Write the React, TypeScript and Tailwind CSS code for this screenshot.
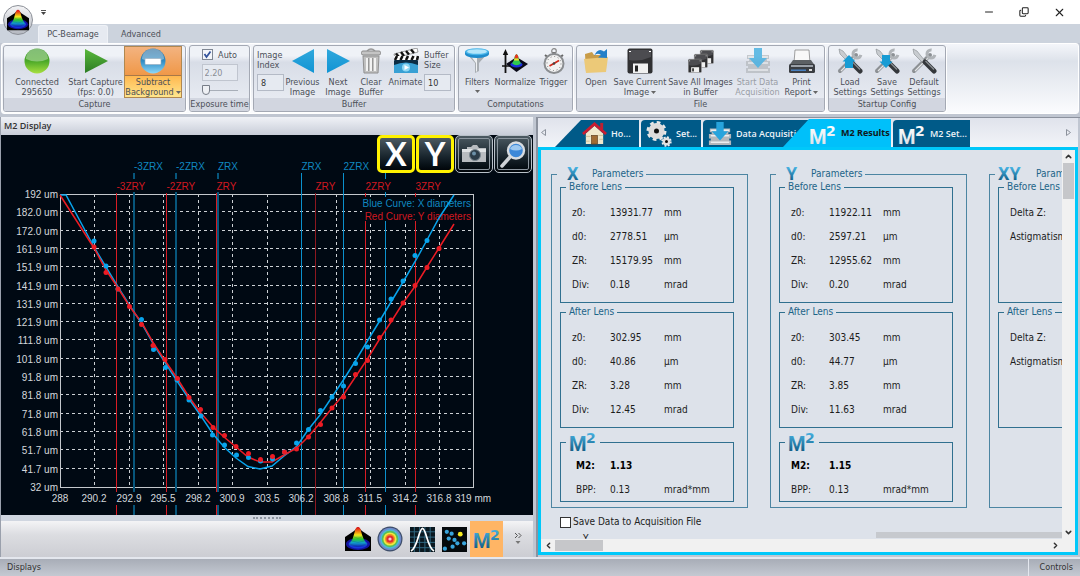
import { useId } from "react";
import type { ReactNode } from "react";
import { ChevronDown, ChevronLeft, ChevronRight, ChevronUp, Copy, Minus, X as Close } from "lucide-react";
import clsx from "clsx";

/* ---------- icons ---------- */

function BeamIcon({ className = "size-[26px]" }: { className?: string }) {
  const id = useId();
  return (
    <svg viewBox="0 0 26 26" className={className} aria-hidden="true">
      <defs>
        <linearGradient id={id} x1="0" y1="0" x2="0" y2="1">
          <stop offset="0.05" stopColor="#e01818" />
          <stop offset="0.25" stopColor="#f08a10" />
          <stop offset="0.4" stopColor="#f4e61c" />
          <stop offset="0.6" stopColor="#2cc82c" />
          <stop offset="0.78" stopColor="#12a0c8" />
          <stop offset="1" stopColor="#1020c0" />
        </linearGradient>
      </defs>
      <path d="M0 11 L9 5 L13 1 L17 5 L26 11 V25 H0 Z" fill="#000" />
      <ellipse cx="13" cy="18" rx="12" ry="6" fill="#1414a0" />
      <ellipse cx="13" cy="18" rx="9.5" ry="4.6" fill="#1838e0" />
      <path d="M13 1 C16 1 16 6 17.500 10 C19 14 20 16 22 18 C20 22 6 22 4 18 C6 16 7.500 14 8.500 10 C10 6 10 1 13 1 Z" fill={`url(#${id})`} />
      <path d="M7 15 Q13 18 19 15 M9 11 Q13 13.500 17 11 M5 18 Q13 22 21 18" stroke="#0a3060" strokeOpacity=".35" strokeWidth=".6" fill="none" />
    </svg>
  );
}

function Ball({ tone, children }: { tone: "green" | "blue"; children?: ReactNode }) {
  const id = useId();
  const stops = tone === "green" ? ["#3f9a2c", "#4aa828", "#a8e040"] : ["#2a6c9c", "#2f8cc4", "#8fd8f8"];
  return (
    <svg viewBox="0 0 26 26" className="size-[26px]" aria-hidden="true">
      <defs>
        <linearGradient id={id} x1="0" y1="0" x2="0" y2="1">
          <stop offset="0" stopColor={stops[0]} />
          <stop offset="0.5" stopColor={stops[1]} />
          <stop offset="1" stopColor={stops[2]} />
        </linearGradient>
      </defs>
      <circle cx="13" cy="13" r="12.500" fill={`url(#${id})`} />
      <path d="M2 11 A11 10.500 0 0 1 24 11 Q13 16 2 11Z" fill="#fff" opacity=".35" />
      {children}
    </svg>
  );
}

function Triangle({ dir, color }: { dir: "left" | "right"; color: [string, string] }) {
  const id = useId();
  return (
    <svg viewBox="0 0 26 26" className="size-[26px]" aria-hidden="true">
      <defs>
        <linearGradient id={id} x1="0" y1="0" x2="0" y2="1">
          <stop offset="0" stopColor={color[0]} />
          <stop offset="1" stopColor={color[1]} />
        </linearGradient>
      </defs>
      <path d={dir === "right" ? "M2 1 L25 13 L2 25 Z" : "M24 1 L2 13 L24 25 Z"} fill={`url(#${id})`} />
    </svg>
  );
}

function TrashIcon() {
  return (
    <svg viewBox="0 0 26 26" className="size-[26px]" aria-hidden="true">
      <path d="M9 3 Q13 -1 17 3" stroke="#999" strokeWidth="1.5" fill="none" />
      <rect x="3.500" y="3" width="19" height="4" rx="1.500" fill="#c4c4c4" stroke="#8a8a8a" />
      <path d="M5 8 H21 L20 25 H6 Z" fill="#c0c0c0" stroke="#909090" />
      <path d="M9 10 V23 M13 10 V23 M17 10 V23" stroke="#f2f2f2" strokeWidth="2" />
      <path d="M10.500 10 V23 M14.500 10 V23" stroke="#8c8c8c" strokeWidth=".8" />
    </svg>
  );
}

function ClapperIcon() {
  return (
    <svg viewBox="0 0 26 26" className="size-[26px]" aria-hidden="true">
      <path d="M1 6 L24 0 L25 4 L2 10 Z" fill="#fff" stroke="#444" strokeWidth=".5" />
      <path d="M3 5.500 L6 9 M8 4 L11 8 M13 3 L16 6.500 M18 1.500 L21 5" stroke="#111" strokeWidth="2.4" />
      <rect x="1" y="8" width="24" height="4" fill="#fff" />
      <path d="M4 8 L2 12 M9.500 8 L7.500 12 M15 8 L13 12 M20.500 8 L18.500 12 M25 8 L24 12" stroke="#111" strokeWidth="2.6" />
      <rect x="1" y="12" width="24" height="13" rx="1" fill="#0b2c44" />
      <path d="M1 17 Q13 12 25 17 V25 H1Z" fill="#38a0d4" />
      <circle cx="13" cy="19.500" r="4" fill="#8ed8f4" />
      <path d="M11.500 17 L16 19.500 L11.500 22 Z" fill="#fff" />
    </svg>
  );
}

function FunnelIcon() {
  return (
    <svg viewBox="0 0 26 26" className="size-[26px]" aria-hidden="true">
      <path d="M2 5 L11 15 V25 L15 23 V15 L24 5 Z" fill="#a8adb2" />
      <path d="M6 7 L12 15 V24 L13 23 V14 L13 7Z" fill="#eef0f2" />
      <path d="M1 3.500 V6 A12 4 0 0 0 25 6 V3.500 Z" fill="#1f8ccc" />
      <ellipse cx="13" cy="3.800" rx="12" ry="3.500" fill="#48b4e8" />
      <ellipse cx="13" cy="3.500" rx="10" ry="2.300" fill="#b4e6fa" />
    </svg>
  );
}

function NormalizeIcon() {
  return (
    <svg viewBox="0 0 26 26" className="size-[26px]" aria-hidden="true">
      <path d="M3.500 25 V5" stroke="#111" strokeWidth="1.800" />
      <path d="M3.500 1 L.8 7 H6.200 Z" fill="#111" />
      <path d="M0 18 H8" stroke="#111" strokeWidth="1.4" />
      <path d="M14.500 9 L26 16 L14.500 24 L4 16 Z" fill="#0a0a18" />
      <ellipse cx="14.500" cy="16.500" rx="6" ry="3" fill="#1c30d8" />
      <path d="M14.500 6 Q16.500 7 17 12 L19 15.500 Q14.500 19 10 15.500 L12 12 Q12.500 7 14.500 6Z" fill="#2ec850" />
      <path d="M14.500 6 Q16.500 7 16.500 10.500 H12.500 Q12.500 7 14.500 6Z" fill="#e83420" />
      <path d="M12.500 10.500 H16.500 L17 12.500 H12 Z" fill="#f4e030" />
    </svg>
  );
}

function StopwatchIcon() {
  return (
    <svg viewBox="0 0 26 26" className="size-[26px]" aria-hidden="true">
      <circle cx="13" cy="3" r="2.300" fill="none" stroke="#888" strokeWidth="1.200" />
      <rect x="11.500" y="4" width="3" height="3" fill="#777" />
      <path d="M4 7 L6.500 9 M22 7 L19.500 9" stroke="#666" strokeWidth="2" />
      <circle cx="13" cy="15.500" r="9.500" fill="#f2f2f2" stroke="#8a8d90" strokeWidth="2" />
      <circle cx="13" cy="15.500" r="7" fill="none" stroke="#777" strokeWidth="1" strokeDasharray="1 2.660" />
      <path d="M8.500 18 L18 12.500" stroke="#d02818" strokeWidth="1.600" />
      <circle cx="13" cy="15.500" r="1.300" fill="#444" />
    </svg>
  );
}

function OpenIcon() {
  return (
    <svg viewBox="0 0 26 26" className="size-[26px]" aria-hidden="true">
      <path d="M2 6 L9 4 L11 7 H23 V24 H3 Z" fill="#c89c48" />
      <path d="M1 11 L25 9 L23 24 L3 25 Z" fill="#ecc978" />
      <path d="M11 8 Q15 -1 21 3.500 L24 1 V10 L15 9.500 L18 7 Q14 4 11 8Z" fill="#2480c8" />
    </svg>
  );
}

function Floppy({ x = 0, y = 0, s = 1 }: { x?: number; y?: number; s?: number }) {
  return (
    <g transform={`translate(${x} ${y}) scale(${s})`}>
      <rect x=".5" y=".5" width="25" height="25" rx="2" fill="#303032" stroke="#aaa" strokeWidth={s < 1 ? 1 : 0} />
      <path d="M2 2 H24 V9 Q13 14 2 12Z" fill="#4c4c50" />
      <rect x="6" y="15.500" width="15" height="9.500" fill="#f0f0f0" />
      <rect x="8" y="17.500" width="3" height="6" fill="#222" />
      <path d="M2 3.500 H4 M22 3.500 H24" stroke="#fff" strokeWidth="1.200" />
    </g>
  );
}

function DataIcon({ className = "size-[26px]" }: { className?: string }) {
  return (
    <svg viewBox="0 0 26 26" className={className} aria-hidden="true">
      <path d="M2 7 H24 V11 H22 V13 H25 V18 H23 V20 H25 V25 H1 V20 H3 V18 H1 V13 H4 V11 H2Z" fill="#b4b8bc" />
      <path d="M3 9 H23 M3 15 H23 M3 22 H23" stroke="#eceef0" strokeWidth="1.600" />
      <path d="M9 0 H17 V10 H22 L13 20 L4 10 H9 Z" fill="#28a4dc" />
    </svg>
  );
}

function PrinterIcon() {
  return (
    <svg viewBox="0 0 26 26" className="size-[26px]" aria-hidden="true">
      <path d="M6 2 H20 L21 15 H5 Z" fill="#f8f8f8" stroke="#888" strokeWidth=".8" />
      <path d="M4 12 H22 L25.500 17 H.5 Z" fill="#5c6064" />
      <rect x="0" y="16" width="26" height="9" rx="1.500" fill="#3a3d42" />
      <rect x="2" y="17" width="22" height="2" fill="#9aa0a8" />
      <rect x="2" y="21.500" width="15" height="1.500" fill="#4880c0" />
      <rect x="20" y="21" width="3" height="2" fill="#ddd" />
    </svg>
  );
}

function ToolsIcon({ arrow }: { arrow?: "up" | "down" }) {
  return (
    <svg viewBox="0 0 26 26" className="size-[26px]" aria-hidden="true">
      <path d="M3 23 L19 7" stroke="#8c9094" strokeWidth="4" strokeLinecap="round" />
      <path d="M4 23 L18 9" stroke="#e4e6e8" strokeWidth="1.200" />
      <circle cx="20" cy="6" r="4" fill="none" stroke="#b0b4b8" strokeWidth="3" strokeDasharray="18 7.100" strokeDashoffset="-1" />
      <path d="M2 1 L6 3 L14 13 L12 15 L3 6 Z" fill="#c8ccd0" stroke="#85898d" strokeWidth=".6" />
      <path d="M14 14 L23 23" stroke="#34373b" strokeWidth="5" strokeLinecap="round" />
      <path d="M14.500 13 L23 21.500" stroke="#8a8e92" strokeWidth="1.200" />
      {arrow === "up" && <path d="M12 7 L18.500 13.500 H16 V20 H8 V13.500 H5.500 Z" fill="#189cd4" />}
      {arrow === "down" && <path d="M12 20 L18.500 13.500 H16 V7 H8 V13.500 H5.500 Z" fill="#189cd4" />}
    </svg>
  );
}

function HouseIcon() {
  return (
    <svg viewBox="0 0 26 26" className="size-[25px]" aria-hidden="true">
      <rect x="19" y="2" width="3" height="7" fill="#c02030" />
      <path d="M4 13 L13 5 L22 13 V24 H4 Z" fill="#f0e8cc" />
      <path d="M4 16 H9 M18 19 H22 M4 21 H8 M17 15 H22" stroke="#cfc098" strokeWidth="1" />
      <path d="M1 13.500 L13 3 L25 13.500" stroke="#c81c30" strokeWidth="3" fill="none" />
      <rect x="10" y="15" width="6" height="9" fill="#a06c34" stroke="#5c3c1c" strokeWidth=".7" />
    </svg>
  );
}

function GearsIcon() {
  return (
    <svg viewBox="0 0 26 26" className="size-[26px]" aria-hidden="true">
      <circle cx="10.500" cy="10" r="8.500" fill="none" stroke="#e8e8e8" strokeWidth="3" strokeDasharray="3.600 3.070" />
      <circle cx="10.500" cy="10" r="5.300" fill="#101010" stroke="#dcdcdc" strokeWidth="5.600" />
      <circle cx="20.500" cy="20.500" r="4.200" fill="none" stroke="#f0f0f0" strokeWidth="2" strokeDasharray="1.800 1.500" />
      <circle cx="20.500" cy="20.500" r="2.700" fill="#101010" stroke="#e0e0e0" strokeWidth="2.400" />
    </svg>
  );
}

function TargetIcon() {
  const rings: [number, string][] = [
    [12.5, "#3c4c68"], [11.3, "#7088c8"], [9.8, "#4cb8d8"], [8.3, "#58c058"], [6.6, "#f0e840"], [5, "#f09020"], [3.6, "#e02c30"], [1.6, "#f8c8d0"],
  ];
  return (
    <svg viewBox="0 0 26 26" className="size-[26px]" aria-hidden="true">
      {rings.map(([r, fill]) => <circle key={r} cx="13" cy="13" r={r} fill={fill} />)}
    </svg>
  );
}

function ProfileIcon() {
  return (
    <svg viewBox="0 0 26 26" className="size-[25px]" aria-hidden="true">
      <rect width="26" height="26" fill="#0a1820" />
      <path d="M4.500 0 V26 M10 0 V26 M15.500 0 V26 M21 0 V26 M0 5 H26 M0 10.500 H26 M0 16 H26 M0 21.500 H26" stroke="#34708c" strokeWidth=".9" />
      <path d="M1 25 C8 22 9 2 13 1.500 C17 2 18 22 25 25" stroke="#fff" strokeWidth="1.800" fill="none" />
    </svg>
  );
}

function ScatterIcon() {
  const dots = [[5, 5], [10, 7], [7, 12], [13, 13.500], [16, 17], [23, 17], [11, 20.500], [3, 22.500]];
  return (
    <svg viewBox="0 0 26 26" className="size-[25px]" aria-hidden="true">
      <rect width="26" height="26" fill="#05090c" />
      {dots.map(([cx, cy]) => <circle key={`${cx}-${cy}`} cx={cx} cy={cy} r="2.200" fill="#38a4dc" />)}
      <circle cx="19" cy="7.500" r="2.500" fill="#f8ec20" />
    </svg>
  );
}

function Mark({ text, sup, tone = "blue", className }: { text: string; sup?: string; tone?: "blue" | "white"; className: string }) {
  const id = useId();
  const width = sup ? 28 : text.length * 13;
  return (
    <svg viewBox={`0 0 ${width} ${sup ? 20 : 14}`} className={clsx("overflow-visible", className)} role="img" aria-label={text + (sup ?? "")}>
      <defs>
        <linearGradient id={id} gradientUnits="userSpaceOnUse" x1="0" y1="0" x2="0" y2={sup ? 20 : 14}>
          <stop offset="0" stopColor={tone === "blue" ? "#48b4e4" : "#ffffff"} />
          <stop offset="1" stopColor={tone === "blue" ? "#125c84" : "#dce2e8"} />
        </linearGradient>
      </defs>
      <g fill={`url(#${id})`} className="font-['Roboto',sans-serif] font-bold">
        <text x="0" y={sup ? 19 : 13} fontSize={sup ? 20 : 18}>{text}</text>
        {sup && <text x="17" y="11" fontSize="14" className="font-['DejaVu_Sans',sans-serif]">{sup}</text>}
      </g>
    </svg>
  );
}

/* ---------- ribbon ---------- */

function Group({ title, children }: { title: string; children: ReactNode }) {
  return (
    <section className="flex flex-col overflow-hidden rounded-[3px] border border-[#a4a9b4] bg-linear-to-b from-[#eff2f7] from-15% via-[#d8dde7] via-25% to-[#eceff5] shadow-[1px_1px_0_#fff]">
      <div className="flex h-[52px] items-stretch px-[3px]">{children}</div>
      <h2 className="h-[13px] bg-[#d2d6e0] text-center leading-[13px] whitespace-nowrap">{title}</h2>
    </section>
  );
}

interface ToolProps {
  icon: ReactNode;
  lines: string[];
  width: string;
  menu?: boolean;
  disabled?: boolean;
  active?: boolean;
}

function Tool({ icon, lines, width, menu, disabled, active }: ToolProps) {
  return (
    <button
      type="button"
      disabled={disabled}
      className={clsx(
        "flex shrink-0 flex-col items-center gap-[3px] pt-[2px]",
        width,
        disabled && "text-[#9a9ea6] [&>svg]:opacity-70",
        active && "bg-[linear-gradient(#f3b482,#f09848_56%,#a87848_56%,#a87848_58%,#ffb850_58%,#ffe890)] outline outline-[#b08850] -outline-offset-1",
      )}
    >
      {icon}
      <span className="leading-[10px] whitespace-nowrap">
        {lines.map((line, i) => (
          <span key={line} className="block">
            {line}
            {menu && i === lines.length - 1 && <Caret inline={lines.length > 1} />}
          </span>
        ))}
      </span>
    </button>
  );
}

function Caret({ inline }: { inline: boolean }) {
  return (
    <svg viewBox="0 0 5 3" className={clsx("h-[3px] w-[5px] fill-[#666]", inline ? "ml-[2px] inline-block align-middle" : "mx-auto mt-[3px] block")} aria-hidden="true">
      <path d="M0 0 H5 L2.500 3 Z" />
    </svg>
  );
}

const numberBox = "h-[17px] w-full border border-[#b4bac6] bg-[#e6eaf1] px-[3px] leading-[15px] text-[#333]";

function Ribbon() {
  return (
    <div className="flex gap-[3px] rounded-[3px] border border-white bg-linear-to-b from-[#f4f6fa] via-[#dde2ea] via-25% to-[#fbfcfe] p-px">
      <Group title="Capture">
        <Tool width="w-[60px]" icon={<Ball tone="green" />} lines={["Connected", "295650"]} />
        <Tool width="w-[57px]" icon={<Triangle dir="right" color={["#5ab83c", "#2c7c24"]} />} lines={["Start Capture", "(fps: 0.0)"]} />
        <Tool
          width="w-[58px]"
          active
          menu
          icon={<Ball tone="blue"><rect x="5" y="10.500" width="16" height="6" rx="1" fill="#fff" stroke="#9ab" strokeWidth=".6" /></Ball>}
          lines={["Subtract", "Background"]}
        />
      </Group>
      <Group title="Exposure time">
        <div className="flex w-[53px] flex-col items-center gap-[4px] pt-[3px]">
          <label className="flex items-center gap-[5px] leading-[10px]">
            <span className="relative size-[11px]">
              <input type="checkbox" defaultChecked className="peer block size-[11px] appearance-none border border-[#7f8793] bg-[#f4f6fa]" />
              <svg viewBox="0 0 11 11" className="pointer-events-none absolute inset-0 hidden peer-checked:block" aria-hidden="true">
                <path d="M2.500 5 L4.500 8 L8.500 2.500" stroke="#34549c" strokeWidth="1.800" fill="none" />
              </svg>
            </span>
            Auto
          </label>
          <input aria-label="Exposure time" defaultValue="2.20" disabled className="h-[17px] w-[36px] border border-[#c0c5cf] bg-[#e6eaf1] px-[2px] text-[#8a8e96]" />
          <input
            aria-label="Exposure"
            type="range"
            defaultValue={0}
            className="h-[10px] w-[36px] appearance-none bg-[linear-gradient(#a8aeb8,#a8aeb8)] bg-size-[100%_1px] bg-center bg-no-repeat [&::-webkit-slider-thumb]:h-[10px] [&::-webkit-slider-thumb]:w-[8px] [&::-webkit-slider-thumb]:appearance-none [&::-webkit-slider-thumb]:rounded-b-full [&::-webkit-slider-thumb]:border [&::-webkit-slider-thumb]:border-[#777d88] [&::-webkit-slider-thumb]:bg-[#eef0f4]"
          />
        </div>
      </Group>
      <Group title="Buffer">
        <label className="flex w-[27px] flex-col gap-[4px] pt-[4px] leading-[10px]">
          <span className="whitespace-nowrap">Image<br />Index</span>
          <input defaultValue="8" className={numberBox} />
        </label>
        <Tool width="w-[37px]" icon={<Triangle dir="left" color={["#30a8dc", "#1094d4"]} />} lines={["Previous", "Image"]} />
        <Tool width="w-[34px]" icon={<Triangle dir="right" color={["#30a8dc", "#1094d4"]} />} lines={["Next", "Image"]} />
        <Tool width="w-[32px]" icon={<TrashIcon />} lines={["Clear", "Buffer"]} />
        <Tool width="w-[37px]" icon={<ClapperIcon />} lines={["Animate"]} />
        <label className="flex w-[27px] flex-col gap-[4px] pt-[4px] leading-[10px]">
          <span className="whitespace-nowrap">Buffer<br />Size</span>
          <input defaultValue="10" className={numberBox} />
        </label>
      </Group>
      <Group title="Computations">
        <Tool width="w-[30px]" menu icon={<FunnelIcon />} lines={["Filters"]} />
        <Tool width="w-[46px]" icon={<NormalizeIcon />} lines={["Normalize"]} />
        <Tool width="w-[31px]" icon={<StopwatchIcon />} lines={["Trigger"]} />
      </Group>
      <Group title="File">
        <Tool width="w-[32px]" icon={<OpenIcon />} lines={["Open"]} />
        <Tool
          width="w-[56px]"
          menu
          icon={<svg viewBox="0 0 26 26" className="size-[26px]" aria-hidden="true"><Floppy /></svg>}
          lines={["Save Current", "Image"]}
        />
        <Tool
          width="w-[65px]"
          icon={
            <svg viewBox="0 0 26 26" className="size-[26px]" aria-hidden="true">
              <Floppy x={12} y={2} s={0.53} />
              <Floppy x={6} y={6} s={0.53} />
              <Floppy x={0} y={11} s={0.53} />
            </svg>
          }
          lines={["Save All Images", "in Buffer"]}
        />
        <Tool width="w-[49px]" disabled icon={<DataIcon />} lines={["Start Data", "Acquisition"]} />
        <Tool width="w-[39px]" menu icon={<PrinterIcon />} lines={["Print", "Report"]} />
      </Group>
      <Group title="Startup Config">
        <Tool width="w-[36px]" icon={<ToolsIcon arrow="up" />} lines={["Load", "Settings"]} />
        <Tool width="w-[38px]" icon={<ToolsIcon arrow="down" />} lines={["Save", "Settings"]} />
        <Tool width="w-[36px]" icon={<ToolsIcon />} lines={["Default", "Settings"]} />
      </Group>
    </div>
  );
}

/* ---------- M2 chart ---------- */

const plot = { left: 59, right: 472, top: 59, bottom: 352 };
const yLabels = ["192", "182.0", "172.0", "161.9", "151.9", "141.9", "131.9", "121.9", "111.8", "101.8", "91.8", "81.8", "71.8", "61.8", "51.7", "41.7", "32"];
const xLabels = ["288", "290.2", "292.9", "295.5", "298.2", "300.9", "303.5", "306.2", "308.8", "311.5", "314.2", "316.8"];
const xStep = 34.45;
const yStep = 18.3;

const rayleighX = [
  { x: 133, label: "-3ZRX" },
  { x: 175, label: "-2ZRX" },
  { x: 217, label: "ZRX" },
  { x: 300.5, label: "ZRX" },
  { x: 342.5, label: "2ZRX" },
  { x: 384.5, label: "" },
];
const rayleighY = [
  { x: 115.5, label: "-3ZRY" },
  { x: 165.5, label: "-2ZRY" },
  { x: 215.5, label: "ZRY" },
  { x: 314.5, label: "ZRY" },
  { x: 364.5, label: "2ZRY" },
  { x: 414.5, label: "3ZRY" },
];

const blueCurve = "59,60 65,60 93,112 105,132 117,152 129,171 141,189 153,210 165,229 176,246 188,264 200,281 212,299 223,312 235,323 247,331.500 259,334 271,331 283,321 296,311 307,295 319,280 331,262 343,244 355,225 367,205 378,187 390,167 402,147 415,125 426,105 438,83 453,60";
const redCurve = "59,60 93,113 105,135 117,153 129,172 141,188 153,209 165,227 176,243 188,262 199,277 212,292 223,302 235,312 247,322 259,327 271,327 283,320 296,313 307,302 319,288 331,273 343,259 355,241 367,223 378,205 390,187 402,168 415,150 426,132 438,113 453,89";

const bluePoints = [
  [93, 106], [105, 131], [117, 154], [140.5, 184.5], [152.5, 214.5], [164.5, 232.5], [176, 245], [188, 265], [200, 281], [211.5, 300], [223.5, 310], [235.5, 320], [247.5, 322.5], [259.5, 326], [271.5, 324], [283.5, 317], [295.5, 308], [307.5, 294.5], [319.5, 275.5], [331, 262], [342.5, 251], [354.5, 228.5], [366.5, 212], [378.5, 185], [390, 164], [402, 146], [414, 120.5], [426, 105.5],
];
const redPoints = [
  [93, 112], [105, 137.5], [117, 154], [128.5, 171.5], [140.5, 189.5], [152, 210.5], [164, 224.5], [176.5, 243.5], [188, 262.5], [199.5, 274.5], [212, 292.5], [223.5, 300.5], [235, 311.5], [247.5, 318.5], [259.5, 324.5], [271.5, 321.5], [283.5, 317], [295.5, 314], [307.5, 302], [319.5, 289.5], [331, 273], [342.5, 262], [354.5, 239.5], [366.5, 225.5], [378.5, 202.5], [390, 185], [402, 168], [414, 150.5], [426, 132.5], [438, 113.5],
];

function M2Chart() {
  return (
    <svg viewBox="0 0 532 380" preserveAspectRatio="xMinYMin meet" className="block w-full font-['Liberation_Sans',sans-serif] text-[10px]" role="img" aria-label="M2 Display">
      <g stroke="#ccd0d4" strokeDasharray="3 3">
        {xLabels.slice(1).map((label, i) => {
          const x = Math.round(plot.left + (i + 1) * xStep) + 0.5;
          return <line key={label} x1={x} x2={x} y1={plot.top} y2={plot.bottom} />;
        })}
        {yLabels.slice(1, -1).map((label, i) => {
          const y = Math.round(plot.top + (i + 1) * yStep) - 0.5;
          return <line key={label} x1={plot.left} x2={plot.right} y1={y} y2={y} />;
        })}
      </g>
      <rect x={plot.left + 0.5} y={plot.top + 0.5} width={plot.right - plot.left} height={plot.bottom - plot.top} fill="none" stroke="#c4c8cc" />
      {rayleighX.map(({ x }) => (
        <line key={x} x1={x} x2={x} y1={38} y2={380} stroke={x < 250 ? "#07567c" : "#0a90cc"} strokeWidth={x < 250 ? 2 : 1} />
      ))}
      {rayleighY.map(({ x }) => (
        <line key={x} x1={x} x2={x} y1={58} y2={380} stroke={x === 314.5 ? "#8c1820" : "#d81c24"} strokeWidth="1" />
      ))}

      {/* label backings hide the marker lines */}
      <g fill="#000913">
        <rect x="113" y="44" width="86" height="13" />
        <rect x="214" y="44" width="26" height="13" />
        <rect x="364" y="44" width="28" height="13" />
        <rect x="48" y="357" width="252" height="13" />
        <rect x="301" y="357" width="13" height="13" />
        <rect x="320" y="357" width="180" height="13" />
        <rect x="361" y="62" width="111" height="24" />
      </g>
      <g fill="#1088c0">
        {rayleighX.map(({ x, label }) => <text key={x} x={x} y="35">{label}</text>)}
        <text x="470" y="72" textAnchor="end">Blue Curve: X diameters</text>
      </g>
      <g fill="#d01820">
        {rayleighY.map(({ x, label }) => <text key={x} x={x} y="55">{label}</text>)}
        <text x="470" y="85" textAnchor="end">Red Curve: Y diameters</text>
      </g>
      <g fill="#d4d8dc">
        {yLabels.map((label, i) => (
          <text key={label} x="57" y={Math.round(plot.top + i * yStep) + 4} textAnchor="end">{label} um</text>
        ))}
        {xLabels.map((label, i) => (
          <text key={label} x={Math.round(plot.left + i * xStep)} y="367" textAnchor="middle">{label}</text>
        ))}
        <text x="454" y="367">319 mm</text>
      </g>

      <g fill="none" strokeWidth="1.5">
        <polyline points={blueCurve} stroke="#08a4ec" />
        <polyline points={redCurve} stroke="#ec1c24" />
      </g>
      {bluePoints.map(([cx, cy]) => <circle key={cx} cx={cx} cy={cy} r="2.500" fill="#08a4ec" />)}
      {redPoints.map(([cx, cy]) => <circle key={cx} cx={cx} cy={cy} r="2.500" fill="#ec1c24" />)}
    </svg>
  );
}

function ChartButton({ label, on, children }: { label: string; on?: boolean; children: ReactNode }) {
  return (
    <button
      type="button"
      aria-label={label}
      className={clsx(
        "flex size-[38px] items-center justify-center rounded-[5px] bg-linear-to-b from-[#4c5a62] via-[#18242c] via-60% to-[#02060a] text-white",
        on ? "border-[3px] border-[#fff200]" : "border border-[#b8c0c8] outline outline-[#8c969f] -outline-offset-4",
      )}
    >
      {children}
    </button>
  );
}

function DisplayPanel() {
  return (
    <section className="flex min-w-0 flex-col border-l border-[#9aa0ac]">
      <h2 className="h-[18px] bg-linear-to-b from-[#f0f2f7] to-[#c8cdd8] pl-[3px] font-['Open_Sans',sans-serif] leading-[18px] font-semibold text-[#333]">M2 Display</h2>
      <div className="relative flex-1 bg-[#000913]">
        <M2Chart />
        <div className="absolute top-0 right-[1px] flex gap-[1px]">
          <ChartButton label="X" on><span className="font-['Lato',sans-serif] text-[32px] leading-[30px] font-bold">X</span></ChartButton>
          <ChartButton label="Y" on><span className="font-['Lato',sans-serif] text-[32px] leading-[30px] font-bold">Y</span></ChartButton>
          <ChartButton label="Snapshot">
            <svg viewBox="0 0 28 28" className="size-[28px]" aria-hidden="true">
              <path d="M2 9 H7 V7 H11 L13 5 H17 L19 8 H26 V22 H2 Z" fill="#b8bcc0" />
              <path d="M2 9 H26 V12 H2Z" fill="#dfe2e4" />
              <circle cx="15" cy="15" r="5.500" fill="#2c3c48" stroke="#7c8890" />
              <circle cx="14" cy="13.500" r="2" fill="#6c90a8" />
            </svg>
          </ChartButton>
          <ChartButton label="Zoom">
            <svg viewBox="0 0 28 28" className="size-[28px]" aria-hidden="true">
              <path d="M3 26 L11 17" stroke="#d0d4d8" strokeWidth="3.500" strokeLinecap="round" />
              <circle cx="17" cy="10.500" r="8" fill="#3c88d8" stroke="#d8dce0" strokeWidth="2.400" />
              <path d="M11 9 A6.500 6.500 0 0 1 23 9 Q17 12 11 9Z" fill="#9cc8f0" />
            </svg>
          </ChartButton>
        </div>
      </div>
      <div className="flex h-[6px] items-center justify-center bg-[#d0d6e0]">
        <span className="h-[2px] w-[28px] border-t-2 border-dotted border-[#8c94a0]" />
      </div>
      <div className="flex h-[36px] items-stretch justify-end bg-linear-to-b from-[#f4f4f6] via-[#dcdde1] via-38% to-[#cccdd3] pr-[11px]">
        <button type="button" aria-label="3D" className="flex w-[32px] items-center justify-center"><BeamIcon /></button>
        <button type="button" aria-label="2D" className="flex w-[32px] items-center justify-center"><TargetIcon /></button>
        <button type="button" aria-label="XY" className="flex w-[32px] items-center justify-center"><ProfileIcon /></button>
        <button type="button" aria-label="Beam tracking" className="flex w-[32px] items-center justify-center"><ScatterIcon /></button>
        <button type="button" aria-label="M2" aria-pressed="true" className="flex w-[33px] items-center justify-center bg-[#ffb565]">
          <Mark text="M" sup="2" className="h-[20px] w-[28px]" />
        </button>
        <button type="button" aria-label="More" className="ml-[11px] flex w-[8px] flex-col items-center pt-[11px] leading-[8px] text-[#555]">
          <svg viewBox="0 0 8 12" className="h-[12px] w-[8px]" aria-hidden="true">
            <path d="M1 1 L3.500 3.500 L1 6 M4.500 1 L7 3.500 L4.500 6" stroke="#555" fill="none" />
            <path d="M1.500 9 H6.500 L4 12Z" fill="#777" />
          </svg>
        </button>
      </div>
    </section>
  );
}

/* ---------- results ---------- */

const beamResults = [
  {
    axis: "X",
    before: [["z0:", "13931.77", "mm"], ["d0:", "2778.51", "µm"], ["ZR:", "15179.95", "mm"], ["Div:", "0.18", "mrad"]],
    after: [["z0:", "302.95", "mm"], ["d0:", "40.86", "µm"], ["ZR:", "3.28", "mm"], ["Div:", "12.45", "mrad"]],
    quality: [["M2:", "1.13", ""], ["BPP:", "0.13", "mrad*mm"]],
  },
  {
    axis: "Y",
    before: [["z0:", "11922.11", "mm"], ["d0:", "2597.21", "µm"], ["ZR:", "12955.62", "mm"], ["Div:", "0.20", "mrad"]],
    after: [["z0:", "303.45", "mm"], ["d0:", "44.77", "µm"], ["ZR:", "3.85", "mm"], ["Div:", "11.63", "mrad"]],
    quality: [["M2:", "1.15", ""], ["BPP:", "0.13", "mrad*mm"]],
  },
];

const deltaRows = [["Delta Z:"], ["Astigmatism:"]];

function Rows({ rows, indent }: { rows: string[][]; indent?: boolean }) {
  return (
    <table className="w-full table-fixed text-left whitespace-nowrap text-[#1c1c1c]">
      <colgroup>
        <col className="w-[38px]" />
        <col className="w-[54px]" />
        <col />
      </colgroup>
      <tbody>
        {rows.map(([label, ...cells]) => (
          <tr key={label} className={clsx("h-[24px]", label === "M2:" && "font-bold text-black")}>
            <th scope="row" className={clsx("[font-weight:inherit]", indent && "pl-[4px]")}>{label}</th>
            {cells.map((cell, i) => <td key={i}>{cell}</td>)}
          </tr>
        ))}
      </tbody>
    </table>
  );
}

function Box({ legend, children }: { legend: ReactNode; children: ReactNode }) {
  return (
    <fieldset className="border border-[#30708f] pl-[11px]">
      <legend className="-ml-[6px] px-[3px] leading-[12px]">{legend}</legend>
      {children}
    </fieldset>
  );
}

function AxisPanel({ axis, children }: { axis: string; children: ReactNode }) {
  return (
    <fieldset className="w-[197px] shrink-0 border border-[#4c85a2] pr-[13px] pb-[5px] pl-[8px] text-[#1c6488]">
      <legend className="-ml-[3px] flex h-[14px] items-center gap-[12px] px-[3px] leading-[14px]">
        <Mark text={axis} className={axis.length > 1 ? "h-[14px] w-[26px]" : "ml-[7px] h-[14px] w-[13px]"} />
        Parameters
      </legend>
      {children}
    </fieldset>
  );
}

function Tab({ icon, label, active, className }: { icon: ReactNode; label: string; active?: boolean; className: string }) {
  return (
    <button
      type="button"
      role="tab"
      aria-selected={active ?? false}
      className={clsx(
        "flex h-[27px] shrink-0 items-center gap-[4px] font-['Open_Sans',sans-serif] whitespace-nowrap",
        active ? "relative h-[28px] bg-[#00c0fa] font-bold text-[#101820]" : "bg-[#005a88] font-semibold text-[#eef3f8]",
        className,
      )}
    >
      {icon}
      {label}
    </button>
  );
}

function ResultsPanel() {
  return (
    <section className="flex min-w-0 flex-col border-t border-l-2 border-[#8c929e] pr-[2px]">
      <div role="tablist" className="flex h-[29px] items-end bg-linear-to-b from-[#e0e3ec] to-[#f2f4f8]">
        <button type="button" aria-label="Scroll tabs left" className="w-[17px] self-center pl-[3px]">
          <svg viewBox="0 0 5 7" className="h-[7px] w-[5px]" aria-hidden="true"><path d="M4.500 .5 V6.500 L.5 3.500 Z" fill="none" stroke="#8c929c" /></svg>
        </button>
        <Tab className="w-[84px] pl-[27px] [clip-path:polygon(26px_0,100%_0,100%_100%,0_100%)]" icon={<HouseIcon />} label="Ho..." />
        <Tab className="ml-[2px] w-[60px] rounded-tl-[4px] pl-[5px]" icon={<GearsIcon />} label="Set..." />
        <Tab className="ml-[2px] w-[107px] rounded-tl-[4px] pl-[5px]" icon={<DataIcon className="size-[24px] shrink-0" />} label="Data Acquisition" />
        <Tab
          active
          className="-ml-[27px] w-[108px] pl-[26px] [clip-path:polygon(26px_0,100%_0,100%_100%,0_100%)]"
          icon={<Mark text="M" sup="2" tone="white" className="mt-[3px] h-[20px] w-[28px] shrink-0" />}
          label="M2 Results"
        />
        <Tab className="ml-[2px] w-[77px] rounded-tl-[4px] pl-[5px]" icon={<Mark text="M" sup="2" tone="white" className="mt-[3px] h-[20px] w-[28px] shrink-0" />} label="M2 Set..." />
        <button type="button" aria-label="Scroll tabs right" className="ml-auto self-center pr-[7px]">
          <svg viewBox="0 0 5 7" className="h-[7px] w-[5px]" aria-hidden="true"><path d="M.5 .5 V6.500 L4.500 3.500 Z" fill="none" stroke="#8c929c" /></svg>
        </button>
      </div>
      <div className="mb-[2px] flex flex-1 flex-col border-[3px] border-[#00c8fa] bg-[#dde2ea]">
        <div className="flex min-h-0 flex-1">
          <div className="relative min-w-0 flex-1 overflow-hidden pt-[17px] pl-[10px] text-[10px]">
            <div className="flex gap-[22px]">
              {beamResults.map(({ axis, before, after, quality }) => (
                <AxisPanel key={axis} axis={axis}>
                  <div className="flex flex-col gap-[3px]">
                    <Box legend="Before Lens"><div className="pt-[7px] pb-[6px]"><Rows rows={before} /></div></Box>
                    <Box legend="After Lens"><div className="pt-[7px] pb-[6px]"><Rows rows={after} /></div></Box>
                    <Box legend={<Mark text="M" sup="2" className="my-[1px] h-[20px] w-[28px]" />}><Rows rows={quality} indent={axis === "X"} /></Box>
                  </div>
                </AxisPanel>
              ))}
              <AxisPanel axis="XY">
                <div className="flex flex-col gap-[3px]">
                  {["Before Lens", "After Lens"].map((title) => (
                    <Box key={title} legend={title}><div className="h-[109px] pt-[7px]"><Rows rows={deltaRows} /></div></Box>
                  ))}
                </div>
              </AxisPanel>
            </div>
            <label className="mt-[8px] ml-[9px] flex items-center gap-[2px] leading-[12px] text-[#222]">
              <input type="checkbox" className="size-[11px] appearance-none border border-[#333] bg-white checked:bg-[#30708f]" />
              Save Data to Acquisition File
            </label>
            <div className="mt-[6px] ml-[32px] h-[5px] leading-[10px] text-[#222]">Y</div>
            <div className="absolute right-0 bottom-[1px] h-[6px] w-[186px] bg-[#c6c9ce]" />
          </div>
          <div className="flex w-[13px] flex-col items-center bg-[#f1f1f1] text-[#333]">
            <button type="button" aria-label="Scroll up" className="flex h-[13px] items-center"><ChevronUp size={9} strokeWidth={4} /></button>
            <div className="h-[36px] w-[11px] bg-[#c6c7ca]" />
            <button type="button" aria-label="Scroll down" className="mt-auto flex h-[13px] items-center"><ChevronDown size={9} strokeWidth={4} /></button>
          </div>
        </div>
        <div className="flex h-[13px] items-center bg-[#f1f1f1] pr-[15px] text-[#333]">
          <button type="button" aria-label="Scroll left" className="flex w-[14px] justify-center"><ChevronLeft size={9} strokeWidth={4} /></button>
          <div className="h-[11px] w-[48px] bg-[#c6c7ca]" />
          <button type="button" aria-label="Scroll right" className="ml-auto"><ChevronRight size={9} strokeWidth={4} /></button>
        </div>
      </div>
    </section>
  );
}

/* ---------- window ---------- */

export default function App() {
  return (
    <div className="flex min-h-screen flex-col bg-[#c0c6d1] font-['DejaVu_Sans_Condensed','DejaVu_Sans',sans-serif] text-[9px] text-[#4c5058]">
      <header className="relative">
        <div className="flex h-[24px] items-center bg-white">
          <button type="button" aria-label="Customize quick access" className="ml-[41px] flex flex-col items-center">
            <span className="h-[1px] w-[5px] bg-[#555]" />
            <svg viewBox="0 0 5 3" className="mt-[1px] h-[3px] w-[5px] fill-[#444]" aria-hidden="true"><path d="M0 0 H5 L2.500 3 Z" /></svg>
          </button>
          <div className="ml-auto flex items-center gap-[24px] pr-[14px] text-[#222]">
            <button type="button" aria-label="Minimize"><Minus size={12} strokeWidth={2} /></button>
            <button type="button" aria-label="Restore"><Copy size={10} strokeWidth={2.500} className="-scale-x-100 rotate-180" /></button>
            <button type="button" aria-label="Close"><Close size={13} strokeWidth={2} /></button>
          </div>
        </div>
        <nav className="flex h-[19px] items-end bg-[#ccd3dd] pl-[38px]">
          <a href="#beamage" className="w-[70px] rounded-t-[3px] border border-b-0 border-[#eef1f6] bg-[#e6eaf1] text-center leading-[17px]">PC-Beamage</a>
          <a href="#advanced" className="w-[66px] text-center leading-[17px]">Advanced</a>
        </nav>
        <button type="button" aria-label="Application menu" className="absolute top-[5px] left-[3px] flex size-[30px] items-center justify-center rounded-full border border-[#8c9098] bg-linear-to-b from-[#f4f4f6] to-[#b4b8c0]">
          <BeamIcon className="size-[22px]" />
        </button>
      </header>
      <div className="px-px pb-[3px]">
        <Ribbon />
      </div>
      <main className="grid flex-1 grid-cols-[533fr_544fr] gap-x-[3px]">
        <DisplayPanel />
        <ResultsPanel />
      </main>
      <footer className="flex h-[19px] items-stretch border-t-2 border-[#e4e7ee] bg-linear-to-b from-[#a8adb7] to-[#c4c9d2] leading-[17px] text-[#333]">
        <span className="pl-[7px]">Displays</span>
        <span className="ml-auto border-l border-[#e4e7ee] pr-[7px] pl-[11px]">Controls</span>
      </footer>
    </div>
  );
}
